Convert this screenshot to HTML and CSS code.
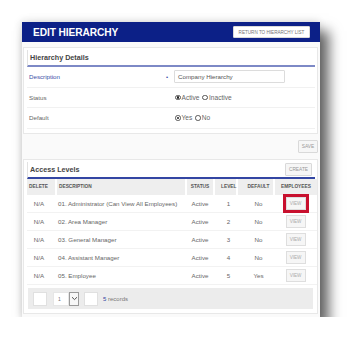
FILE: index.html
```html
<!DOCTYPE html>
<html>
<head>
<meta charset="utf-8">
<link rel="stylesheet" href="styles.css">
</head>
<body>
<div class="window">
  <header class="topbar">
    <h1 class="title">EDIT HIERARCHY</h1>
    <button class="btn btn-return">RETURN TO HIERARCHY LIST</button>
  </header>
  <main class="content">
    <section class="card card-details">
      <div class="card-head"><h2 class="card-title">Hierarchy Details</h2></div>
      <div class="form-row">
        <span class="lbl lbl-req">Description</span>
        <span class="star">•</span>
        <div class="ctl"><span class="input">Company Hierarchy</span></div>
      </div>
      <div class="form-row">
        <span class="lbl">Status</span>
        <span class="star"></span>
        <div class="ctl">
          <span class="radio on"></span><span class="rlabel">Active</span>
          <span class="radio"></span><span class="rlabel">Inactive</span>
        </div>
      </div>
      <div class="form-row last">
        <span class="lbl">Default</span>
        <span class="star"></span>
        <div class="ctl">
          <span class="radio on"></span><span class="rlabel">Yes</span>
          <span class="radio"></span><span class="rlabel">No</span>
        </div>
      </div>
    </section>
    <div class="actions"><button class="btn btn-small btn-save">SAVE</button></div>
    <section class="card card-levels">
      <div class="card-head head-flex"><h2 class="card-title">Access Levels</h2><button class="btn btn-small btn-create">CREATE</button></div>
      <table class="grid">
        <colgroup>
          <col class="c-del"><col class="c-desc"><col class="c-status"><col class="c-level"><col class="c-default"><col class="c-emp">
        </colgroup>
        <thead>
          <tr><th class="t-del">DELETE</th><th class="t-desc">DESCRIPTION</th><th>STATUS</th><th class="t-off">LEVEL</th><th class="t-off">DEFAULT</th><th>EMPLOYEES</th></tr>
        </thead>
        <tbody>
          <tr><td class="t-del">N/A</td><td class="t-desc">01. Administrator (Can View All Employees)</td><td>Active</td><td class="t-off">1</td><td class="t-off">No</td><td><span class="view hl">VIEW</span></td></tr>
          <tr><td class="t-del">N/A</td><td class="t-desc">02. Area Manager</td><td>Active</td><td class="t-off">2</td><td class="t-off">No</td><td><span class="view">VIEW</span></td></tr>
          <tr><td class="t-del">N/A</td><td class="t-desc">03. General Manager</td><td>Active</td><td class="t-off">3</td><td class="t-off">No</td><td><span class="view">VIEW</span></td></tr>
          <tr><td class="t-del">N/A</td><td class="t-desc">04. Assistant Manager</td><td>Active</td><td class="t-off">4</td><td class="t-off">No</td><td><span class="view">VIEW</span></td></tr>
          <tr><td class="t-del">N/A</td><td class="t-desc">05. Employee</td><td>Active</td><td class="t-off">5</td><td class="t-off">Yes</td><td><span class="view">VIEW</span></td></tr>
        </tbody>
      </table>
      <div class="pager">
        <span class="pbox"></span>
        <span class="psel"><span class="pval">1</span><span class="parrow"><svg width="7" height="5" viewBox="0 0 7 5"><path d="M1 1.2 L3.5 3.6 L6 1.2" fill="none" stroke="#555" stroke-width="1"/></svg></span></span>
        <span class="pbox"></span>
        <span class="precs"><span class="pnum">5</span> records</span>
      </div>
    </section>
  </main>
</div>
</body>
</html>
```
FILE: styles.css
```css
* { box-sizing: border-box; }
html, body { margin: 0; padding: 0; background: #fff; }
body { font-family: "Liberation Sans", Arial, sans-serif; color: #555; }

.window {
  margin: 22px 0 0 22px;
  width: 298px;
  height: 295px;
  background: #fafafa;
  box-shadow: 8px 10px 12px 1px rgba(0,0,0,0.6), -1px -1px 8px rgba(0,0,0,0.12);
}

.topbar {
  height: 20px;
  background: #0c2087;
  display: flex;
  align-items: center;
  justify-content: space-between;
  padding: 0 10px 0 11px;
}
.title {
  margin: 0;
  color: #fff;
  font-size: 10.2px;
  font-weight: bold;
  letter-spacing: -0.1px;
}
.btn {
  font-family: "Liberation Sans", Arial, sans-serif;
  background: #f6f6f6;
  border: 1px solid #d9d9d9;
  border-radius: 1px;
  color: #888;
  padding: 0;
  margin: 0;
}
.btn-return {
  width: 77px;
  height: 12px;
  font-size: 4.6px;
  color: #777;
  background: #fff;
  white-space: nowrap;
}

.content { padding: 5px 2px 0 1px; }

.card {
  background: #fff;
  border: 1px solid #e8e8e8;
  padding: 2px 2px 4px 3px;
}
.card-head {
  height: 17px;
  border-left: 1px solid #e2e2e2;
  border-bottom: 2px solid #7d89c6;
  padding-left: 2px;
  display: flex;
  align-items: center;
}
.head-flex { justify-content: space-between; padding-right: 3px; border-bottom-color: #3346a3; }
.card-title {
  margin: 0;
  font-size: 7.2px;
  font-weight: bold;
  color: #444;
}

.form-row {
  display: grid;
  grid-template-columns: 137px 8px 1fr;
  align-items: center;
  height: 20.5px;
  padding-left: 2px;
  border-bottom: 1px solid #f1f1f1;
}
.lbl { font-size: 6.2px; color: #666; }
.lbl-req { color: #3b4ea6; }
.star { color: #3b4ea6; font-size: 6px; }
.ctl { display: flex; align-items: center; }
.input {
  width: 111px;
  height: 13px;
  border: 1px solid #dcdcdc;
  border-radius: 1px;
  font-size: 6.2px;
  color: #555;
  padding-left: 3px;
  display: flex;
  align-items: center;
  background: #fff;
}
.radio {
  width: 5.5px;
  height: 5.5px;
  border: 0.8px solid #555;
  border-radius: 50%;
  margin: 0 1px 0 1px;
  position: relative;
  background: #fff;
}
.radio.on::after {
  content: "";
  position: absolute;
  left: 0.9px; top: 0.9px;
  width: 2.5px; height: 2.5px;
  border-radius: 50%;
  background: #222;
}
.rlabel { font-size: 6.6px; color: #666; margin-right: 2px; }

.actions { display: flex; justify-content: flex-end; padding: 6px 0 6px; }
.btn-small { height: 13px; font-size: 4.8px; color: #999; }
.btn-save { width: 20px; }
.btn-create { width: 27px; }

.grid {
  width: 100%;
  border-collapse: collapse;
  table-layout: fixed;
  font-size: 6.2px;
  color: #666;
}
.c-del { width: 29px; }
.c-desc { width: 130px; }
.c-status { width: 28px; }
.c-level { width: 23px; }
.c-default { width: 37px; }
.c-emp { width: 43px; }
.grid th {
  height: 16px;
  background: #eeeeee;
  border-left: 2px solid #fff;
  font-size: 4.8px;
  font-weight: bold;
  color: #555;
  text-align: center;
  padding: 0;
}
.grid th:first-child { border-left: 0; }
.grid td {
  height: 18px;
  text-align: center;
  border-bottom: 1px solid #f2f2f2;
  padding: 0;
  white-space: nowrap;
}
.grid .t-del { padding-right: 5px; }
.grid .t-desc { text-align: left; padding-left: 2px; }
.grid .t-off { padding-left: 6px; }
.view {
  display: inline-block;
  width: 20px;
  height: 13px;
  line-height: 11px;
  border: 1px solid #dedede;
  background: #f6f6f6;
  font-size: 4.6px;
  color: #aaa;
  vertical-align: middle;
}
.view.hl { outline: 3px solid #c8102e; }

.pager {
  margin: 3px 2px 0 1px;
  height: 21px;
  background: #ececec;
  display: flex;
  align-items: center;
  padding-left: 5px;
}
.pbox {
  width: 14px;
  height: 14px;
  background: #fff;
  border: 1px solid #e0e0e0;
}
.psel {
  display: flex;
  height: 14px;
  margin: 0 5px 0 6px;
}
.pval {
  width: 16px;
  background: #fff;
  border: 1px solid #e6e6e6;
  font-size: 5px;
  color: #777;
  display: flex;
  align-items: center;
  padding-left: 4px;
}
.parrow {
  width: 10px;
  background: #f7f7f7;
  border: 1px solid #9a9a9a;
  display: flex;
  align-items: center;
  justify-content: center;
}
.precs { font-size: 6px; color: #777; margin-left: 5px; }
.pnum { color: #3346a3; }
```
